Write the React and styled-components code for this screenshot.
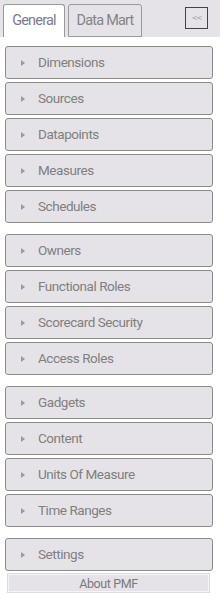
import React from "react";
import styled, { createGlobalStyle } from "styled-components";

const Global = createGlobalStyle`
  html, body { margin: 0; padding: 0; background: #ffffff; }
  body { font-family: Roboto, "Liberation Sans", sans-serif; }
`;

const Panel = styled.div`
  width: 221px;
  height: 597px;
  box-sizing: border-box;
  background: #ffffff;
`;

const Header = styled.div`
  height: 37px;
  box-sizing: border-box;
  background: #e5e3e7;
  display: flex;
  align-items: flex-start;
  padding: 4px 0 0 3px;
  width: 220px;
`;

const Tab = styled.div`
  box-sizing: border-box;
  height: 33px;
  margin-right: 3px;
  padding-bottom: 1px;
  display: flex;
  align-items: center;
  justify-content: center;
  white-space: nowrap;
  font-size: 14.5px;
  letter-spacing: -0.8px;
  color: ${(p) => (p.$active ? "#7d7d8a" : "#858585")};
  background: ${(p) => (p.$active ? "#ffffff" : "#e5e3e7")};
  border: 1px solid #9a9a9a;
  border-bottom: ${(p) => (p.$active ? "none" : "1px solid #9a9a9a")};
  border-radius: 3px 3px 0 0;
  width: ${(p) => p.$w}px;
`;

const Spacer = styled.div`
  flex: 1;
`;

const Collapse = styled.button`
  box-sizing: border-box;
  width: 23px;
  height: 22px;
  margin: 3px 12px 0 0;
  padding: 0;
  border: 1px solid #444;
  background: #e5e3e7;
  color: #999;
  font-size: 7px;
  font-family: "DejaVu Sans", sans-serif;
  letter-spacing: -1px;
  display: flex;
  align-items: center;
  justify-content: center;
`;

const List = styled.div`
  padding: 9px 8px 0 5px;
  display: flex;
  flex-direction: column;
`;

const Group = styled.div`
  display: flex;
  flex-direction: column;
  gap: 3px;
  margin-bottom: ${(p) => p.$mb}px;
`;

const Item = styled.div`
  box-sizing: border-box;
  height: 33px;
  border: 1px solid #8c8c8c;
  border-radius: 3px;
  background: #e5e3e7;
  display: flex;
  align-items: center;
  padding: 0 0 2px 15px;
  font-size: 13.5px;
  letter-spacing: -0.45px;
  color: #808080;
`;

const Arrow = styled.span`
  width: 0;
  height: 0;
  margin-top: 2px;
  border-top: 3.5px solid transparent;
  border-bottom: 3.5px solid transparent;
  border-left: 4px solid #9a9a9a;
  margin-right: 13px;
`;

const About = styled.div`
  box-sizing: border-box;
  margin: 3px 0 0 3px;
  width: 201px;
  height: 18px;
  background: #e5e3e7;
  border: 1px solid #f4f4f6;
  outline: 1px solid #dcdcdc;
  display: flex;
  align-items: center;
  justify-content: center;
  font-size: 12.5px;
  letter-spacing: -0.4px;
  color: #7a7a7a;
`;

const groups = [
  ["Dimensions", "Sources", "Datapoints", "Measures", "Schedules"],
  ["Owners", "Functional Roles", "Scorecard Security", "Access Roles"],
  ["Gadgets", "Content", "Units Of Measure", "Time Ranges"],
  ["Settings"],
];

export default function App() {
  return (
    <Panel>
      <Global />
      <Header>
        <Tab $active $w={62}>General</Tab>
        <Tab $w={74}>Data Mart</Tab>
        <Spacer />
        <Collapse>&lt;&lt;</Collapse>
      </Header>
      <List>
        {groups.map((g, i) => (
          <Group key={i} $mb={i < groups.length - 1 ? 11 : 0}>
            {g.map((name) => (
              <Item key={name}>
                <Arrow />
                {name}
              </Item>
            ))}
          </Group>
        ))}
        <About>About PMF</About>
      </List>
    </Panel>
  );
}
